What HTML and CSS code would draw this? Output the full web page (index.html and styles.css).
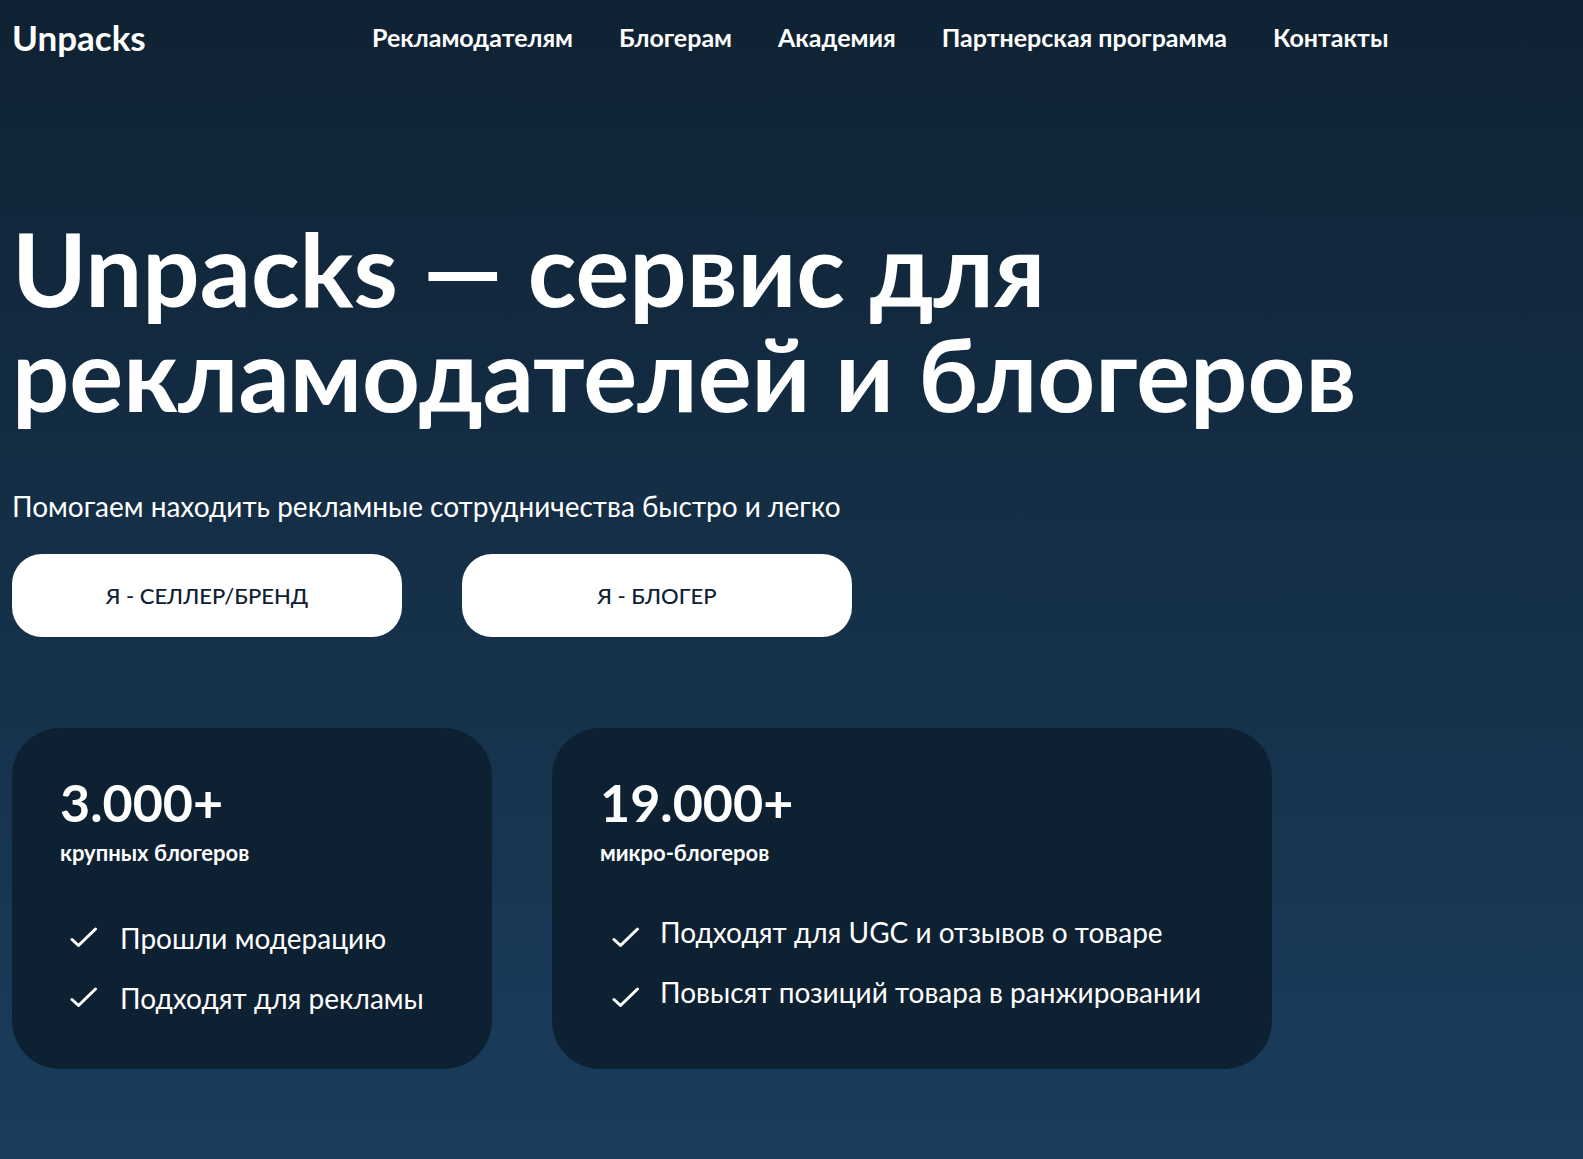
FILE: index.html
```html
<!DOCTYPE html>
<html lang="ru">
<head>
    <meta charset="UTF-8">
    <meta name="viewport" content="width=device-width, initial-scale=1.0">
    <title>Unpacks</title>
    <link rel="stylesheet" href="styles.css">
</head>
<body>
    <header class="header">
        <a class="logo" href="#">Unpacks</a>
        <nav class="nav">
            <a href="#">Рекламодателям</a>
            <a href="#">Блогерам</a>
            <a href="#">Академия</a>
            <a href="#">Партнерская программа</a>
            <a href="#">Контакты</a>
        </nav>
    </header>

    <main class="main">
        <h1 class="title">Unpacks — сервис для<br>рекламодателей и блогеров</h1>
        <p class="subtitle">Помогаем находить рекламные сотрудничества быстро и легко</p>

        <div class="buttons">
            <button class="btn" type="button">Я - СЕЛЛЕР/БРЕНД</button>
            <button class="btn" type="button">Я - БЛОГЕР</button>
        </div>

        <div class="cards">
            <section class="card">
                <h2 class="number">3.000+</h2>
                <p class="caption">крупных блогеров</p>
                <ul class="list">
                    <li>
                        <svg class="check" width="28" height="22" viewBox="0 0 28 22"><path d="M2 12.5L8.5 18.5L25.5 2"/></svg>
                        <span>Прошли модерацию</span>
                    </li>
                    <li>
                        <svg class="check" width="28" height="22" viewBox="0 0 28 22"><path d="M2 12.5L8.5 18.5L25.5 2"/></svg>
                        <span>Подходят для рекламы</span>
                    </li>
                </ul>
            </section>

            <section class="card card-wide">
                <h2 class="number">19.000+</h2>
                <p class="caption">микро-блогеров</p>
                <ul class="list">
                    <li>
                        <svg class="check" width="28" height="22" viewBox="0 0 28 22"><path d="M2 12.5L8.5 18.5L25.5 2"/></svg>
                        <span>Подходят для UGC и отзывов о товаре</span>
                    </li>
                    <li>
                        <svg class="check" width="28" height="22" viewBox="0 0 28 22"><path d="M2 12.5L8.5 18.5L25.5 2"/></svg>
                        <span>Повысят позиций товара в ранжировании</span>
                    </li>
                </ul>
            </section>
        </div>
    </main>
</body>
</html>
```

FILE: styles.css
```css
* {
    box-sizing: border-box;
    margin: 0;
    padding: 0;
}
body {
    min-height: 100vh;
    padding: 0 12px 90px;
    font-family: Lato, "Open Sans", sans-serif;
    color: #fff;
    background: linear-gradient(#0f2233, #1a3d5d);
}
a {
    color: #fff;
    text-decoration: none;
}
.header {
    display: flex;
    align-items: center;
    height: 74px;
}
.logo {
    width: 360px;
    font-size: 35px;
    font-weight: bold;
}
.nav {
    display: flex;
    gap: 46px;
    font-size: 25px;
    font-weight: bold;
}
.title {
    margin-top: 142px;
    font-size: 101px;
    line-height: 105px;
    font-weight: bold;
}
.subtitle {
    margin-top: 60px;
    font-size: 28px;
    line-height: 40px;
}
.buttons {
    display: flex;
    gap: 60px;
    margin-top: 28px;
}
.btn {
    width: 390px;
    height: 83px;
    border: none;
    border-radius: 30px;
    background: #fff;
    color: #0e2132;
    font-family: inherit;
    font-size: 22px;
    font-weight: 500;
}
.cards {
    display: flex;
    gap: 60px;
    margin-top: 91px;
}
.card {
    width: 480px;
    padding: 44px 48px 41px;
    border-radius: 48px;
    background: #0e2132;
}
.card-wide {
    width: 720px;
}
.number {
    font-size: 52px;
    line-height: 60px;
    font-weight: bold;
}
.caption {
    margin-top: 6px;
    font-size: 22px;
    line-height: 30px;
    font-weight: bold;
}
.list {
    margin-top: 40px;
    list-style: none;
}
.list li {
    display: flex;
    align-items: center;
    gap: 22px;
    height: 60px;
    padding-left: 10px;
    font-size: 28px;
    white-space: nowrap;
}
.check {
    flex: none;
    fill: none;
    stroke: #fff;
    stroke-width: 3;
    stroke-linecap: round;
    stroke-linejoin: round;
}
.card-wide li {
    gap: 20px;
    padding-left: 12px;
}
.card-wide span {
    padding-bottom: 12px;
}
```
